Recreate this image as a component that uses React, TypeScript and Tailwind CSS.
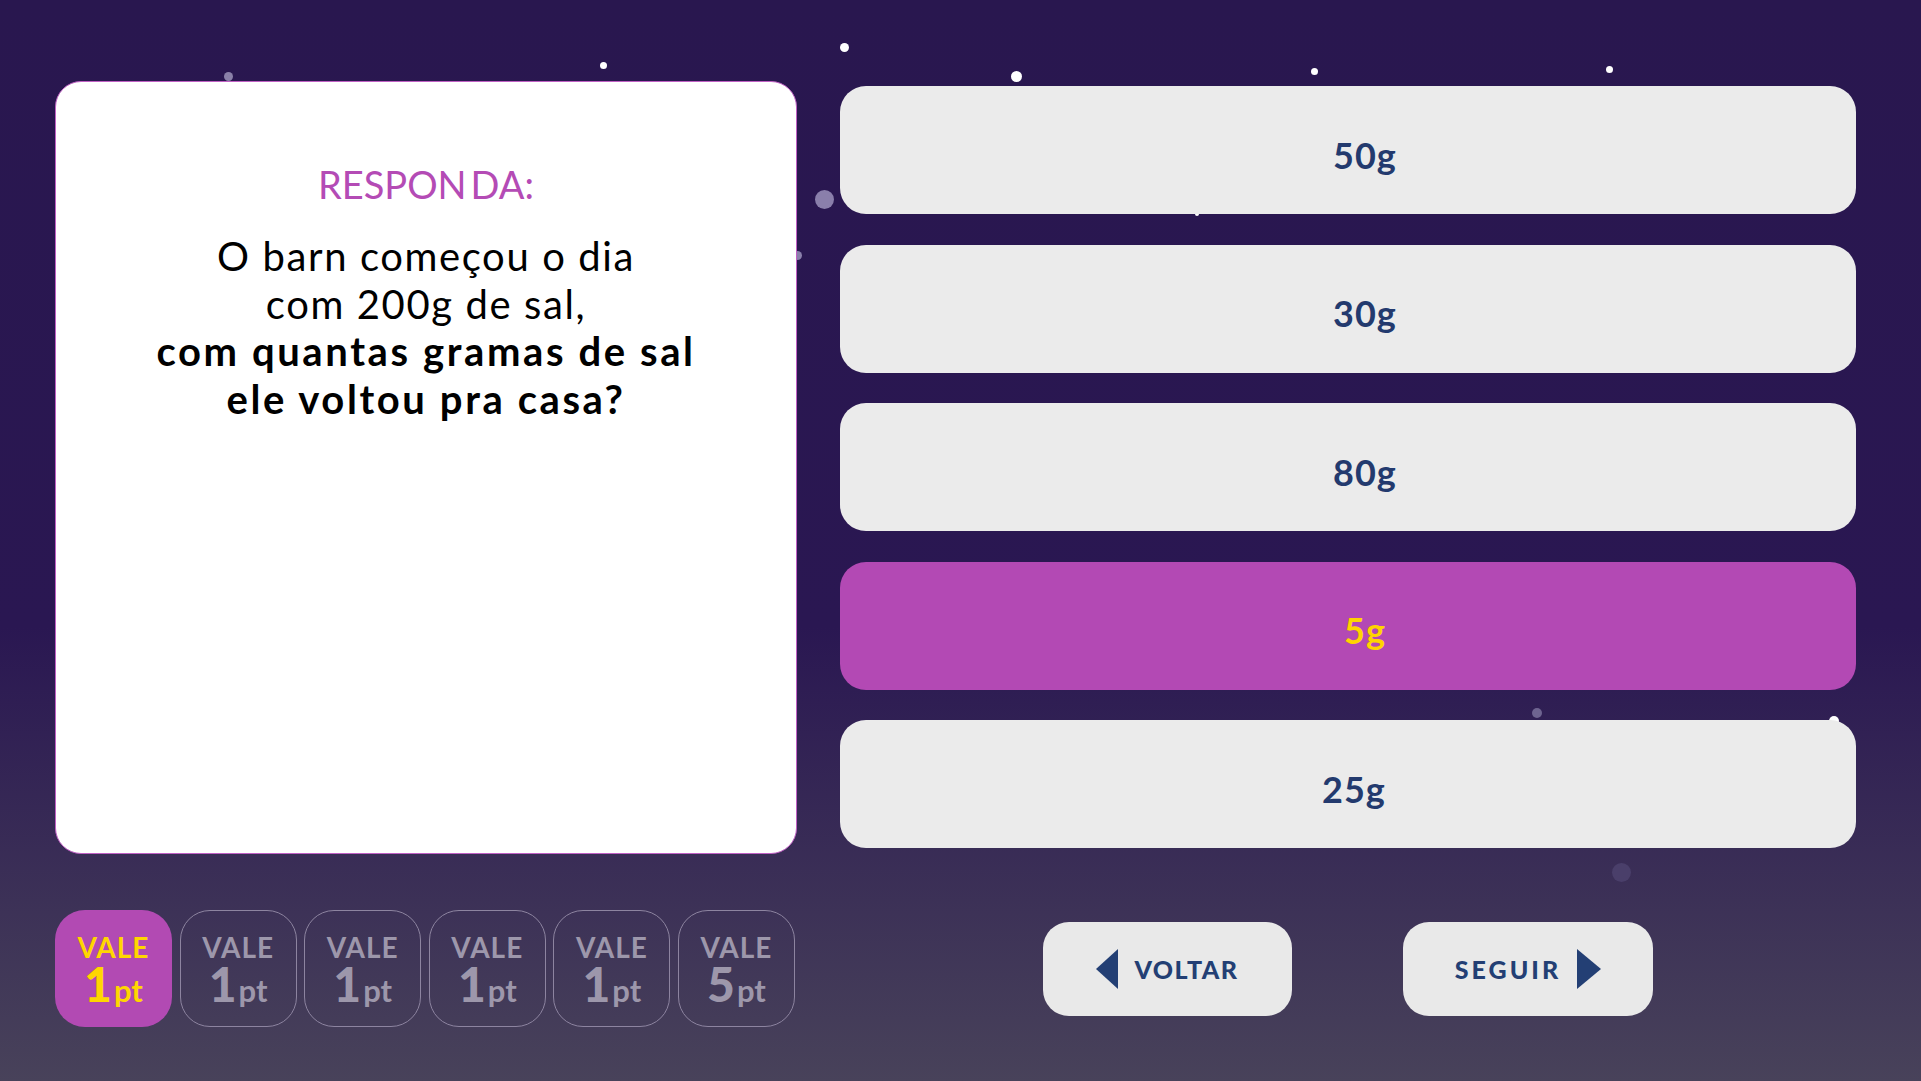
import React from "react";

const answers = [
  { label: "50g", selected: false, shift: "pl-[34px]" },
  { label: "30g", selected: false, shift: "pl-[34px]" },
  { label: "80g", selected: false, shift: "pl-[34px]" },
  { label: "5g", selected: true, shift: "pl-[34px]" },
  { label: "25g", selected: false, shift: "pl-[12px]" },
];

const tiles = [
  { n: "1", active: true },
  { n: "1", active: false },
  { n: "1", active: false },
  { n: "1", active: false },
  { n: "1", active: false },
  { n: "5", active: false },
];

function Stars() {
  return (
    <>
      <div className="absolute left-[840px] top-[43px] w-[9px] h-[9px] rounded-full bg-white" />
      <div className="absolute left-[600px] top-[62px] w-[7px] h-[7px] rounded-full bg-white" />
      <div className="absolute left-[224px] top-[72px] w-[9px] h-[9px] rounded-full bg-[#8a80a8]" />
      <div className="absolute left-[1011px] top-[71px] w-[11px] h-[11px] rounded-full bg-white" />
      <div className="absolute left-[1311px] top-[68px] w-[7px] h-[7px] rounded-full bg-white" />
      <div className="absolute left-[1606px] top-[66px] w-[7px] h-[7px] rounded-full bg-white" />
      <div className="absolute left-[815px] top-[190px] w-[19px] h-[19px] rounded-full bg-[#8a7fab]" />
      <div className="absolute left-[793px] top-[251px] w-[9px] h-[9px] rounded-full bg-[#8a7fab]" />
      <div className="absolute left-[1195px] top-[212px] w-[4px] h-[4px] rounded-full bg-white" />
      <div className="absolute left-[1532px] top-[708px] w-[10px] h-[10px] rounded-full bg-[#6e6490]" />
      <div className="absolute left-[1829px] top-[716px] w-[10px] h-[10px] rounded-full bg-white" />
      <div className="absolute left-[1612px] top-[863px] w-[19px] h-[19px] rounded-full bg-[#4a3f6a]" />
    </>
  );
}

export default function App() {
  return (
    <div className="relative w-full h-[1081px] overflow-hidden bg-[linear-gradient(to_bottom,#29174f_0%,#2a1752_58%,#48425a_100%)] font-['Lato',sans-serif]">
      <Stars />
      <div className="relative flex gap-[43px] pl-[55px] pt-[81px]">
        {/* Left column */}
        <div className="flex flex-col w-[742px]">
          <div className="h-[773px] bg-white rounded-[26px] border border-[#c060c4] flex flex-col items-center pt-[79px]">
            <div className="text-[38px] leading-[46px] text-[#b44bb5] font-normal">
              <span>RESPON</span>
              <span className="ml-[4px]">DA:</span>
            </div>
            <div className="mt-[26px] text-center text-black text-[40px] leading-[47.5px]">
              <div className="font-normal tracking-[1.6px]">O barn começou o dia</div>
              <div className="font-normal tracking-[1.6px]">com 200g de sal,</div>
              <div className="font-bold tracking-[2.6px]">com quantas gramas de sal</div>
              <div className="font-bold tracking-[2.6px]">ele voltou pra casa?</div>
            </div>
          </div>
          <div className="mt-[56px] flex gap-[7.6px]">
            {tiles.map((t, i) => (
              <div
                key={i}
                className={
                  t.active
                    ? "w-[117px] h-[117px] rounded-[30px] bg-[#b24ab3] text-[#ffd600] flex flex-col items-center pt-[23px]"
                    : "w-[117px] h-[117px] rounded-[30px] border-[1.5px] border-[#8d84a0] text-[#9d97ab] flex flex-col items-center pt-[22px]"
                }
              >
                <div className="text-[28px] leading-[28px] font-bold tracking-[1px]">VALE</div>
                <div className="flex items-baseline leading-[46px]">
                  <span className="text-[48px] font-black">{t.n}</span>
                  <span className="text-[31px] font-bold ml-[2px]">pt</span>
                </div>
              </div>
            ))}
          </div>
        </div>

        {/* Right column */}
        <div className="flex flex-col w-[1016px] pt-[5px]">
          <div className="flex flex-col gap-[30.5px]">
            {answers.map((a) => (
              <div
                key={a.label}
                className={
                  (a.selected
                    ? "bg-[#b349b4] text-[#ffd400] "
                    : "bg-[#ebebeb] text-[#233a6e] ") +
                  "h-[128px] rounded-[26px] flex items-center justify-center pt-[9px] text-[36px] font-bold tracking-[1px] " +
                  a.shift
                }
              >
                {a.label}
              </div>
            ))}
          </div>
          <div className="mt-[74px] flex justify-center gap-[111px]">
            <div className="w-[249px] h-[94px] rounded-[26px] bg-[#e9e9e9] flex items-center justify-center gap-[16px] text-[#233f74]">
              <svg width="22" height="40" viewBox="0 0 22 40">
                <polygon points="22,0 22,40 0,20" fill="#233f74" />
              </svg>
              <span className="text-[25px] font-black tracking-[1.5px] pt-[2px]">VOLTAR</span>
            </div>
            <div className="w-[250px] h-[94px] rounded-[26px] bg-[#e9e9e9] flex items-center justify-center gap-[16px] text-[#233f74]">
              <span className="text-[25px] font-black tracking-[3px] pt-[2px]">SEGUIR</span>
              <svg width="24" height="40" viewBox="0 0 24 40">
                <polygon points="0,0 0,40 24,20" fill="#233f74" />
              </svg>
            </div>
          </div>
        </div>
      </div>
    </div>
  );
}
